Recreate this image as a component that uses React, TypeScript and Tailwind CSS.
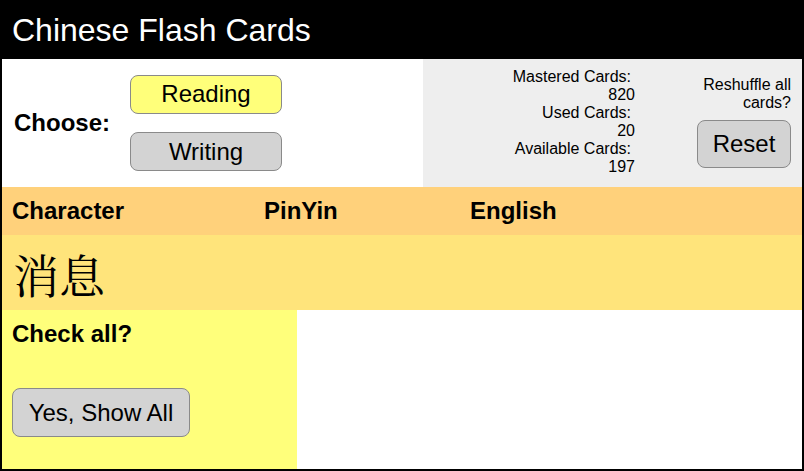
export default function App() {
  const stats = [
    { label: 'Mastered Cards:', value: 820 },
    { label: 'Used Cards:', value: 20 },
    { label: 'Available Cards:', value: 197 },
  ];

  return (
    <div className="w-[804px] h-[471px] border-2 border-black flex flex-col font-['Liberation_Sans',Arial,sans-serif] text-black overflow-hidden">
      {/* Title bar */}
      <div className="h-[57px] shrink-0 bg-black text-white text-[32px] leading-none flex items-center pl-[10px] pb-[2px]">
        Chinese Flash Cards
      </div>

      {/* Mode + stats */}
      <div className="h-[128px] shrink-0 flex">
        <div className="w-[421px] bg-white flex items-center">
          <span className="pl-[12px] w-[128px] text-[24px] font-bold">Choose:</span>
          <div className="flex flex-col gap-[18px]">
            <button className="w-[152px] h-[39px] rounded-lg border border-[#8a8a8a] bg-[#ffff7a] text-[24px] leading-none pb-[2px]">
              Reading
            </button>
            <button className="w-[152px] h-[39px] rounded-lg border border-[#8a8a8a] bg-[#d3d3d3] text-[24px] leading-none">
              Writing
            </button>
          </div>
        </div>
        <div className="flex-1 bg-[#eeeeee] flex">
          <div className="w-[212px] pt-[9px] text-right text-[16px] leading-[18px]">
            {stats.map((s) => (
              <div key={s.label}>
                <div className="pr-[4px]">{s.label}</div>
                <div>{s.value}</div>
              </div>
            ))}
          </div>
          <div className="flex-1 flex flex-col items-end pr-[11px] pt-[17px]">
            <div className="text-right text-[16px] leading-[18px] w-[100px]">Reshuffle all cards?</div>
            <button className="mt-[8px] w-[94px] h-[48px] rounded-lg border border-[#8a8a8a] bg-[#d3d3d3] text-[24px] leading-none">
              Reset
            </button>
          </div>
        </div>
      </div>

      {/* Column headings */}
      <div className="h-[48px] shrink-0 bg-[#ffd17b] flex items-center text-[24px] font-bold pl-[10px]">
        <span className="w-[252px]">Character</span>
        <span className="w-[206px]">PinYin</span>
        <span>English</span>
      </div>

      {/* Current card */}
      <div className="h-[75px] shrink-0 bg-[#ffe47b] flex items-center pl-[11px]">
        <span className="text-[46px] leading-none font-['Noto_Serif_CJK_SC','Noto_Sans_CJK_SC',serif]">消息</span>
      </div>

      {/* Check all */}
      <div className="flex-1 flex">
        <div className="w-[295px] bg-[#ffff7b] pl-[10px] pt-[6px]">
          <div className="text-[24px] font-bold">Check all?</div>
          <button className="mt-[36px] w-[178px] h-[49px] rounded-lg border border-[#8a8a8a] bg-[#d3d3d3] text-[24px] leading-none">
            Yes, Show All
          </button>
        </div>
        <div className="flex-1 bg-white" />
      </div>
    </div>
  );
}
